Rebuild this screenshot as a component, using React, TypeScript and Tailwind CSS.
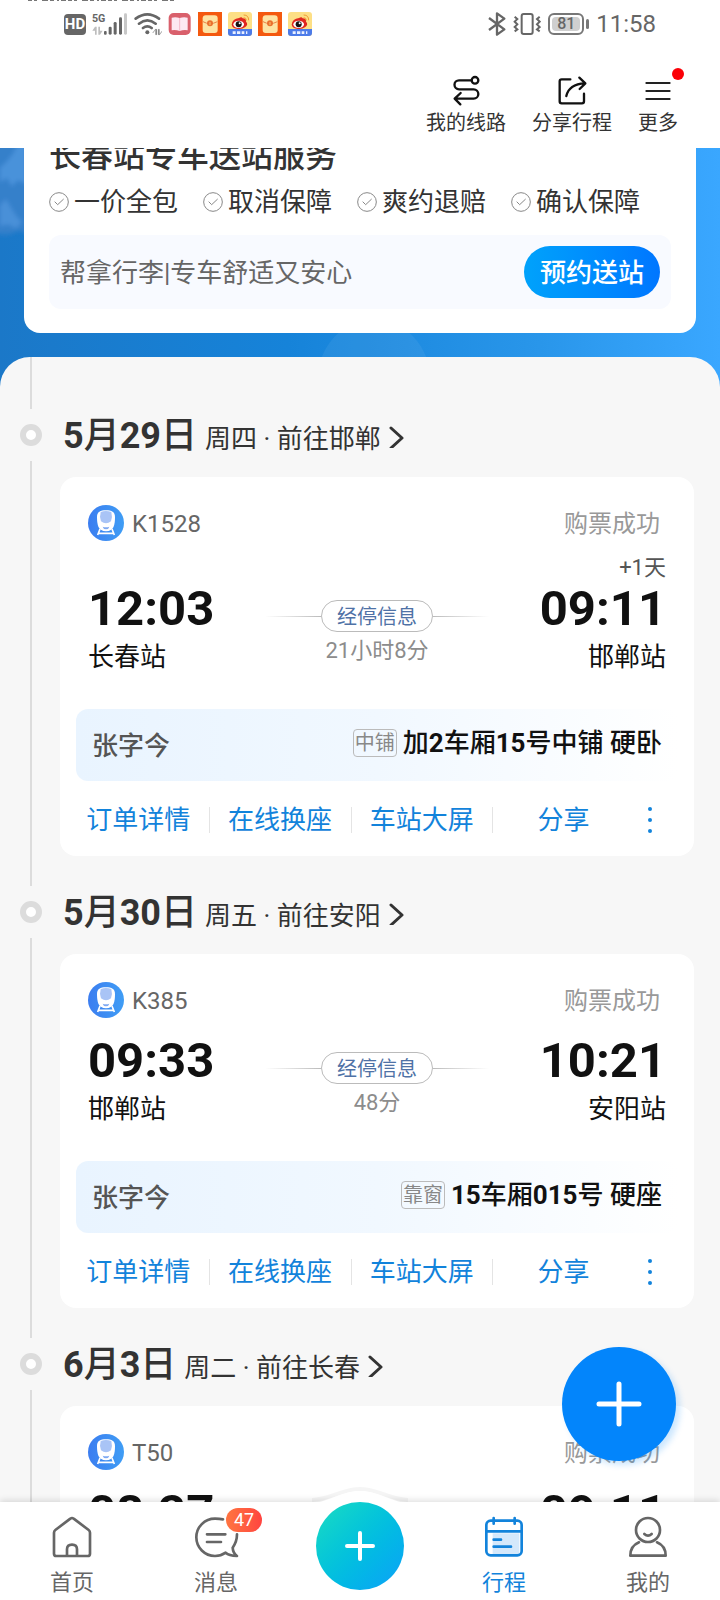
import type { ReactNode } from 'react';

interface Trip {
  date: string;
  weekday: string;
  destination: string;
  train: string;
  status: string;
  departTime: string;
  departStation: string;
  arriveTime: string;
  arriveStation: string;
  dayOffset?: string;
  duration: string;
  passenger: string;
  seatTag: string;
  seat: string;
}

const trips: Trip[] = [
  {
    date: '5月29日',
    weekday: '周四',
    destination: '前往邯郸',
    train: 'K1528',
    status: '购票成功',
    departTime: '12:03',
    departStation: '长春站',
    arriveTime: '09:11',
    arriveStation: '邯郸站',
    dayOffset: '+1天',
    duration: '21小时8分',
    passenger: '张字今',
    seatTag: '中铺',
    seat: '加2车厢15号中铺 硬卧',
  },
  {
    date: '5月30日',
    weekday: '周五',
    destination: '前往安阳',
    train: 'K385',
    status: '购票成功',
    departTime: '09:33',
    departStation: '邯郸站',
    arriveTime: '10:21',
    arriveStation: '安阳站',
    duration: '48分',
    passenger: '张字今',
    seatTag: '靠窗',
    seat: '15车厢015号 硬座',
  },
  {
    date: '6月3日',
    weekday: '周二',
    destination: '前往长春',
    train: 'T50',
    status: '购票成功',
    departTime: '08:27',
    departStation: '安阳站',
    arriveTime: '09:11',
    arriveStation: '长春站',
    duration: '24小时44分',
    passenger: '张字今',
    seatTag: '中铺',
    seat: '8车厢12号中铺 硬卧',
  },
];

const guarantees = ['一价全包', '取消保障', '爽约退赔', '确认保障'];
const cardActions = ['订单详情', '在线换座', '车站大屏', '分享'];

// Digits are set bolder than the Chinese characters around them.
function MixedText({ text }: { text: string }) {
  return (
    <span>
      {text.split(/(\d+)/).map((part, i) => (
        <span key={i} className={/\d/.test(part) ? 'font-bold' : 'font-medium'}>
          {part}
        </span>
      ))}
    </span>
  );
}

function SignalIcon() {
  return (
    <svg className="h-6 w-9" viewBox="0 0 108 72" fill="#666">
      <text x="0" y="31" fontFamily="Roboto" fontWeight="700" fontSize="32">
        5G
      </text>
      <path d="M9 44v24h5V44zM1 56l8-12v12zM19 44v24h5V44zM24 56h8l-8 12z" fill="#bdbdbd" />
      <rect x="36" y="57" width="8" height="11" rx="3" />
      <rect x="50" y="44" width="9" height="24" rx="4" />
      <rect x="65" y="30" width="9" height="38" rx="4" />
      <rect x="81" y="16" width="9" height="52" rx="4" />
      <rect x="96" y="4" width="9" height="64" rx="4" fill="#c8c8c8" />
    </svg>
  );
}

function WifiIcon() {
  return (
    <svg className="h-6 w-7" viewBox="0 0 84 72" fill="none" stroke="#666" strokeWidth="8" strokeLinecap="round">
      <path d="M5 20Q40-6 75 20M15 35q25-20 50 0M27 48q13-10 26 0" />
      <circle cx="40" cy="61" r="6" fill="#666" stroke="none" />
      <path d="M57 62l8-10v16h3V52h-3zM84 58l-8 10V52h-3v16h3z" fill="#666" stroke="#666" strokeWidth="1" />
    </svg>
  );
}

function BookAppIcon() {
  return (
    <svg className="h-6 w-6" viewBox="0 0 72 72">
      <rect x="2" y="3" width="66" height="66" rx="15" fill="#d9606c" />
      <path d="M11 17q12-3 24 1 12-4 24-1v38q-12-2-24 2-12-4-24-2z" fill="#fde8f2" />
      <path d="M35 18v38" stroke="#f4b9cb" strokeWidth="3" />
    </svg>
  );
}

function PacketAppIcon() {
  return (
    <svg className="h-6 w-6" viewBox="0 0 72 72">
      <rect width="72" height="72" fill="#f4590f" />
      <rect x="14" y="10" width="45" height="53" rx="9" fill="#fde3a4" />
      <path d="M15 29q21 12 43 0" fill="none" stroke="#ea8144" strokeWidth="3" />
      <circle cx="36" cy="34" r="9" fill="#e9702f" />
      <path d="M36 30v9" stroke="#f9c26f" strokeWidth="3" />
    </svg>
  );
}

function WeiboAppIcon() {
  return (
    <svg className="h-6 w-6" viewBox="0 0 72 72">
      <rect width="72" height="72" rx="9" fill="#fddf85" />
      <path d="M0 51h72v12q0 9-9 9H9q-9 0-9-9z" fill="#4c7be9" />
      <path d="M11 38q2-18 22-20 8-5 11 1 11 0 10 10 8 8-2 16-11 8-26 5-13-2-15-12z" fill="#e0271f" />
      <ellipse cx="32" cy="37" rx="16" ry="11" fill="#fff" />
      <circle cx="32" cy="37" r="9" fill="#171212" />
      <circle cx="35" cy="34" r="3" fill="#fff" />
      <path d="M47 9q15 0 15 16M47 17q8 0 8 8" fill="none" stroke="#f09a35" strokeWidth="3" />
      <path d="M14 62h9M27 62h10M41 62h8M54 62h4" stroke="#eaf0ff" strokeWidth="8" />
    </svg>
  );
}

function StatusBar() {
  return (
    <div className="flex h-12 items-center justify-between pr-16 pl-16 text-[#666]">
      <div className="flex items-center gap-[6px]">
        <span className="flex h-[21px] w-[22px] items-center justify-center rounded bg-[#666] text-[15px] leading-none font-bold text-white">
          HD
        </span>
        <SignalIcon />
        <WifiIcon />
        <BookAppIcon />
        <PacketAppIcon />
        <WeiboAppIcon />
        <PacketAppIcon />
        <WeiboAppIcon />
      </div>
      <div className="flex items-center gap-[7px]">
        <svg className="h-6 w-[18px]" viewBox="0 0 54 72" fill="none" stroke="#666" strokeWidth="7" strokeLinejoin="round">
          <path d="M3 18l46 34-22 16V4l22 16L3 54" />
        </svg>
        <svg className="h-6 w-[28px]" viewBox="0 0 84 72" fill="none" stroke="#666" strokeWidth="6">
          <rect x="26" y="6" width="33" height="60" rx="6" />
          <path d="M5 14l8 7-8 8 8 8-8 8 8 7-8 6M80 14l-8 7 8 8-8 8 8 8-8 7 8 6" />
        </svg>
        <div className="flex items-center gap-[2px]">
          <span className="flex h-[22px] w-9 items-center justify-center rounded-md border-2 border-[#777] p-[2px]">
            <span className="flex h-full w-full items-center justify-center rounded-sm bg-[#cfcfcf] text-base leading-none font-medium">
              81
            </span>
          </span>
          <span className="h-[10px] w-[3px] rounded-sm bg-[#777]" />
        </div>
        <span className="text-2xl leading-none">11:58</span>
      </div>
    </div>
  );
}

function HeaderAction({ label, children }: { label: string; children: ReactNode }) {
  return (
    <button className="relative flex flex-col items-center gap-[3px] text-xl leading-7 text-[#333]">
      <span className="flex h-8 items-center">{children}</span>
      {label}
    </button>
  );
}

function Header() {
  return (
    <header className="relative z-10 h-[148px] shrink-0 bg-white">
      <svg className="absolute top-0 left-7 h-px w-[148px]" viewBox="0 0 148 1">
        <path d="M0 0H148" stroke="#777" strokeWidth="2" strokeDasharray="4 2 3 5 6 2 4 3 2 2 5 2" />
      </svg>
      <StatusBar />
      <div className="flex justify-end gap-[26px] pt-[26px] pr-[42px]">
        <HeaderAction label="我的线路">
          <svg className="h-8 w-[30px]" viewBox="0 0 90 96" fill="none" stroke="#111" strokeWidth="7" strokeLinecap="round" strokeLinejoin="round">
            <circle cx="72" cy="19" r="10" />
            <path d="M62 19H24a13 13 0 0 0 0 27H68a14 14 0 0 1 0 28H12M29 57L11 74l17 17" />
          </svg>
        </HeaderAction>
        <HeaderAction label="分享行程">
          <svg className="h-[30px] w-[30px]" viewBox="0 0 90 90" fill="none" stroke="#111" strokeWidth="7" strokeLinecap="round" strokeLinejoin="round">
            <path d="M40 13H14q-6 0-6 6v60q0 6 6 6h61q6 0 6-6V56" />
            <path d="M28 63Q36 27 84 25M67 8l18 17-17 17" />
          </svg>
        </HeaderAction>
        <HeaderAction label="更多">
          <svg className="h-[30px] w-[30px]" viewBox="0 0 90 90" fill="none" stroke="#222" strokeWidth="6" strokeLinecap="round">
            <path d="M10 24h70M10 48h70M10 72h70" />
          </svg>
          <span className="absolute -top-[6px] -right-[6px] h-3 w-3 rounded-full bg-[#fb0007]" />
        </HeaderAction>
      </div>
    </header>
  );
}

function HeroBackground() {
  return (
    <svg className="absolute inset-0 h-full w-full" viewBox="0 0 720 241" preserveAspectRatio="none">
      <defs>
        <linearGradient id="sky" x1="0" x2="1" y1="0" y2="0">
          <stop offset="0" stopColor="#1b78c8" />
          <stop offset="0.4" stopColor="#1683d9" />
          <stop offset="0.75" stopColor="#2996ea" />
          <stop offset="1" stopColor="#3aa7ff" />
        </linearGradient>
        <filter id="mist" x="-20%" y="-20%" width="140%" height="140%">
          <feGaussianBlur stdDeviation="2" />
        </filter>
      </defs>
      <rect width="720" height="241" fill="url(#sky)" />
      <g filter="url(#mist)">
        <path d="M-6-6h34v100q-8-6-14-2-8 4-20 0z" fill="#3580ca" />
        <path d="M0 30l5-4 7-8 6-10 8-4v42l-8-4-6 6-5-8-7 4z" fill="#4a92da" />
        <path d="M0 66l6-6 5 8 5 8 6 6-6 6-8-4-8 2z" fill="#4a90d8" />
      </g>
      <circle cx="374" cy="231" r="56" fill="#fff" opacity="0.06" />
    </svg>
  );
}

function TransferCard() {
  return (
    <div className="relative mx-6 -mt-3 rounded-b-2xl bg-white px-[25px] pb-6">
      <h2 className="text-[32px] leading-10 font-medium text-[#333]">长春站专车送站服务</h2>
      <ul className="mt-2 flex gap-[25px] text-[26px] leading-9 text-[#333]">
        {guarantees.map((item) => (
          <li key={item} className="flex items-center gap-[5px]">
            <svg className="h-5 w-5" viewBox="0 0 60 60" fill="none" stroke="#888" strokeWidth="3">
              <circle cx="30" cy="30" r="28" />
              <path d="M17 29l9 9 18-17" />
            </svg>
            {item}
          </li>
        ))}
      </ul>
      <div className="mt-[15px] flex h-[74px] items-center justify-between rounded-xl bg-[#f8faff] px-[11px]">
        <span className="pt-0.5 text-[26px] text-[#666]">帮拿行李|专车舒适又安心</span>
        <button className="h-[52px] w-[136px] rounded-full bg-linear-to-r from-[#00a2fb] to-[#0076ff] pt-0.5 text-[26px] font-medium text-white">
          预约送站
        </button>
      </div>
    </div>
  );
}

function TrainIcon() {
  return (
    <svg className="h-9 w-9" viewBox="0 0 108 108">
      <defs>
        <linearGradient id="train" x1="0" x2="1" y1="0" y2="0">
          <stop offset="0" stopColor="#3b7df0" />
          <stop offset="1" stopColor="#3f9df5" />
        </linearGradient>
      </defs>
      <circle cx="54" cy="54" r="54" fill="url(#train)" />
      <path d="M36 72L29 90M72 72l7 18M30 85h48" fill="none" stroke="#fff" strokeWidth="5" />
      <path d="M54 16c17 0 27 5 27 20 0 22-3 43-27 43S27 58 27 36c0-15 10-20 27-20z" fill="#fff" />
      <path d="M38 21q16-6 32 0 4 14-1 28-15 12-30 0-5-14-1-28z" fill="#a9c4f6" />
      <path d="M44 65q10 4 20 0-2 8-10 8t-10-8z" fill="#7fa9f2" />
    </svg>
  );
}

function TripCard({ trip }: { trip: Trip }) {
  return (
    <article className="rounded-2xl bg-white pt-7">
      <div className="flex h-9 items-center justify-between pr-[34px] pl-7 text-2xl">
        <div className="flex items-center gap-2 text-[#666]">
          <TrainIcon />
          <span className="pt-0.5">{trip.train}</span>
        </div>
        <span className="pt-0.5 text-[#999]">{trip.status}</span>
      </div>

      <div className="mt-[14px] grid grid-cols-3 items-end px-7 text-[26px] leading-[34px] text-[#111]">
        <div>
          <div className="text-[49px] leading-[57px] font-bold">{trip.departTime}</div>
          <div className="mt-[3px]">{trip.departStation}</div>
        </div>
        <div className="flex flex-col items-center pb-[9px]">
          <div className="flex items-center">
            <span className="h-px w-14 bg-linear-to-r from-transparent to-[#bbb]" />
            <button className="h-8 w-28 rounded-full border border-[#bbb] pt-0.5 text-xl leading-none text-[#4f72a6]">
              经停信息
            </button>
            <span className="h-px w-14 bg-linear-to-l from-transparent to-[#bbb]" />
          </div>
          <div className="mt-[5px] text-[22px] leading-7 text-[#8c8c8c]">{trip.duration}</div>
        </div>
        <div className="text-right">
          {trip.dayOffset && <div className="text-[22px] leading-[25px] text-[#555]">{trip.dayOffset}</div>}
          <div className="text-[49px] leading-[57px] font-bold">{trip.arriveTime}</div>
          <div className="mt-[3px]">{trip.arriveStation}</div>
        </div>
      </div>

      <div className="mx-4 mt-[35px] flex h-[72px] items-center justify-between rounded-xl bg-linear-to-r from-[#e9f4ff] via-[#f1f8ff] to-white px-4 text-[26px] font-medium">
        <span className="pt-0.5 text-[#555]">{trip.passenger}</span>
        <span className="flex items-center gap-[6px] pb-1 text-[#111]">
          <span className="rounded border border-[#bbb] px-px text-xl leading-[26px] font-normal text-[#888]">
            {trip.seatTag}
          </span>
          <MixedText text={trip.seat} />
        </span>
      </div>

      <div className="flex h-[75px] items-center pt-0.5 pr-7 pl-2 text-[26px] text-[#1283db]">
        {cardActions.map((action, i) => (
          <button
            key={action}
            className={`h-[26px] flex-1 leading-[26px] ${i < cardActions.length - 1 ? 'border-r border-[#e4e4e4]' : ''}`}
          >
            {action}
          </button>
        ))}
        <button className="flex w-8 justify-center" aria-label="更多操作">
          <svg className="h-7 w-2" viewBox="0 0 8 28" fill="currentColor">
            <circle cx="4" cy="3" r="2" />
            <circle cx="4" cy="14" r="2" />
            <circle cx="4" cy="25" r="2" />
          </svg>
        </button>
      </div>
    </article>
  );
}

function TripSection({ trip, first }: { trip: Trip; first: boolean }) {
  return (
    <section className="flex">
      <div className="flex w-[60px] shrink-0 flex-col pl-5">
        <span className={`ml-[10px] w-[2px] bg-[#dcdcdc] ${first ? 'h-[52px]' : 'h-[30px]'}`} />
        <span className="my-[15px] h-[22px] w-[22px] rounded-full border-[6px] border-[#dcdcdc] bg-white" />
        <span className="ml-[10px] w-[2px] flex-1 bg-[#dcdcdc]" />
      </div>
      <div className="min-w-0 flex-1 pr-[26px]">
        <a
          href="#trip"
          className={`flex items-baseline gap-2 pb-[17px] pl-[3px] text-[#333] ${first ? 'pt-[55px]' : 'pt-[33px]'}`}
        >
          <span className="text-4xl leading-[48px]">
            <MixedText text={trip.date} />
          </span>
          <span className="text-[26px] leading-9">
            {trip.weekday} · {trip.destination}
          </span>
          <svg className="h-6 w-4 self-center" viewBox="0 0 16 24" fill="none" stroke="#333" strokeWidth="3" strokeLinecap="round" strokeLinejoin="round">
            <path d="M2 4l11 10L2 24" />
          </svg>
        </a>
        <TripCard trip={trip} />
      </div>
    </section>
  );
}

function NavItem({ label, active, children }: { label: string; active?: boolean; children: ReactNode }) {
  return (
    <a
      href="#tab"
      className={`relative flex flex-1 flex-col items-center pt-[14px] text-[22px] leading-8 ${active ? 'text-[#1283db]' : 'text-[#666]'}`}
    >
      {children}
      <span className="mt-2">{label}</span>
    </a>
  );
}

function BottomNav() {
  return (
    <nav className="relative z-10 flex h-[98px] shrink-0 bg-white shadow-[0_-2px_6px_rgba(0,0,0,0.12)]">
      <svg className="absolute -top-4 left-1/2 h-[18px] w-24 -translate-x-1/2" viewBox="0 0 96 18">
        <path d="M0 14C20 13 30 3 48 3s28 10 48 11" fill="none" stroke="#000" strokeOpacity="0.04" strokeWidth="4" />
        <path d="M0 17C20 15 30 5 48 5s28 10 48 12v1H0z" fill="#fff" />
      </svg>
      <NavItem label="首页">
        <svg className="h-[43px] w-11" viewBox="0 0 132 129" fill="none" stroke="currentColor" strokeWidth="8" strokeLinejoin="round">
          <path d="M12 50q0-5 4-8l45-34q5-4 10 0l45 34q4 3 4 8v63q0 7-7 7H19q-7 0-7-7z" />
          <path d="M51 120v-20q0-14 15-14t15 14v20" />
        </svg>
      </NavItem>
      <NavItem label="消息">
        <svg className="h-[43px] w-[46px]" viewBox="0 0 138 129" fill="none" stroke="currentColor" strokeWidth="8" strokeLinejoin="round" strokeLinecap="round">
          <path d="M90 10Q80 8 66 8A56 56 0 0 0 66 120q18 0 32-10 10 9 34 10-12-8-13-25 13-18 13-40" />
          <path d="M42 55h55M42 78h42" />
        </svg>
        <span className="absolute top-[6px] left-1/2 ml-[10px] flex h-6 w-9 items-center justify-center rounded-full bg-linear-to-r from-[#ff7440] to-[#ff4440] text-lg leading-none text-white">
          47
        </span>
      </NavItem>
      <div className="relative flex flex-1 justify-center">
        <button
          className="flex h-[88px] w-[88px] items-center justify-center rounded-full bg-linear-to-br from-[#1bdcc0] to-[#11a0f8]"
          aria-label="新建"
        >
          <svg className="h-8 w-8" viewBox="0 0 32 32" stroke="#fff" strokeWidth="4" strokeLinecap="round">
            <path d="M3 16h26M16 3v26" />
          </svg>
        </button>
      </div>
      <NavItem label="行程" active>
        <svg className="h-[43px] w-10" viewBox="0 0 120 129" fill="none" stroke="currentColor" strokeWidth="8" strokeLinecap="round">
          <rect x="26" y="52" width="80" height="62" fill="#d4e8fb" stroke="none" />
          <rect x="7" y="14" width="106" height="104" rx="13" />
          <path d="M9 46h102M29 6v17M92 6v17M29 71h22M29 92h52" />
        </svg>
      </NavItem>
      <NavItem label="我的">
        <svg className="h-[43px] w-10" viewBox="0 0 120 129" fill="none" stroke="currentColor" strokeWidth="8" strokeLinecap="round" strokeLinejoin="round">
          <circle cx="60" cy="42" r="36" />
          <path d="M49 54q11 10 22 0" />
          <path d="M33 79Q7 90 7 119h106q0-29-26-40" />
        </svg>
      </NavItem>
    </nav>
  );
}

export default function App() {
  return (
    <div className="relative flex h-screen flex-col overflow-hidden bg-[#f7f7f7] font-[Roboto,'Noto_Sans_CJK_SC',sans-serif]">
      <Header />
      <main className="min-h-0 flex-1 overflow-hidden">
        <div className="relative pb-14">
          <HeroBackground />
          <TransferCard />
        </div>
        <div className="relative -mt-8 rounded-t-[30px] bg-[#f7f7f7]">
          {trips.map((trip, i) => (
            <TripSection key={trip.date} trip={trip} first={i === 0} />
          ))}
        </div>
      </main>
      <button
        className="absolute right-11 bottom-[139px] flex h-[114px] w-[114px] items-center justify-center rounded-full bg-[#0385fb] shadow-[4px_4px_6px_rgba(3,133,251,0.2)]"
        aria-label="添加行程"
      >
        <svg className="h-12 w-12" viewBox="0 0 48 48" stroke="#fff" strokeWidth="5" strokeLinecap="round">
          <path d="M4 24h40M24 4v40" />
        </svg>
      </button>
      <BottomNav />
    </div>
  );
}
